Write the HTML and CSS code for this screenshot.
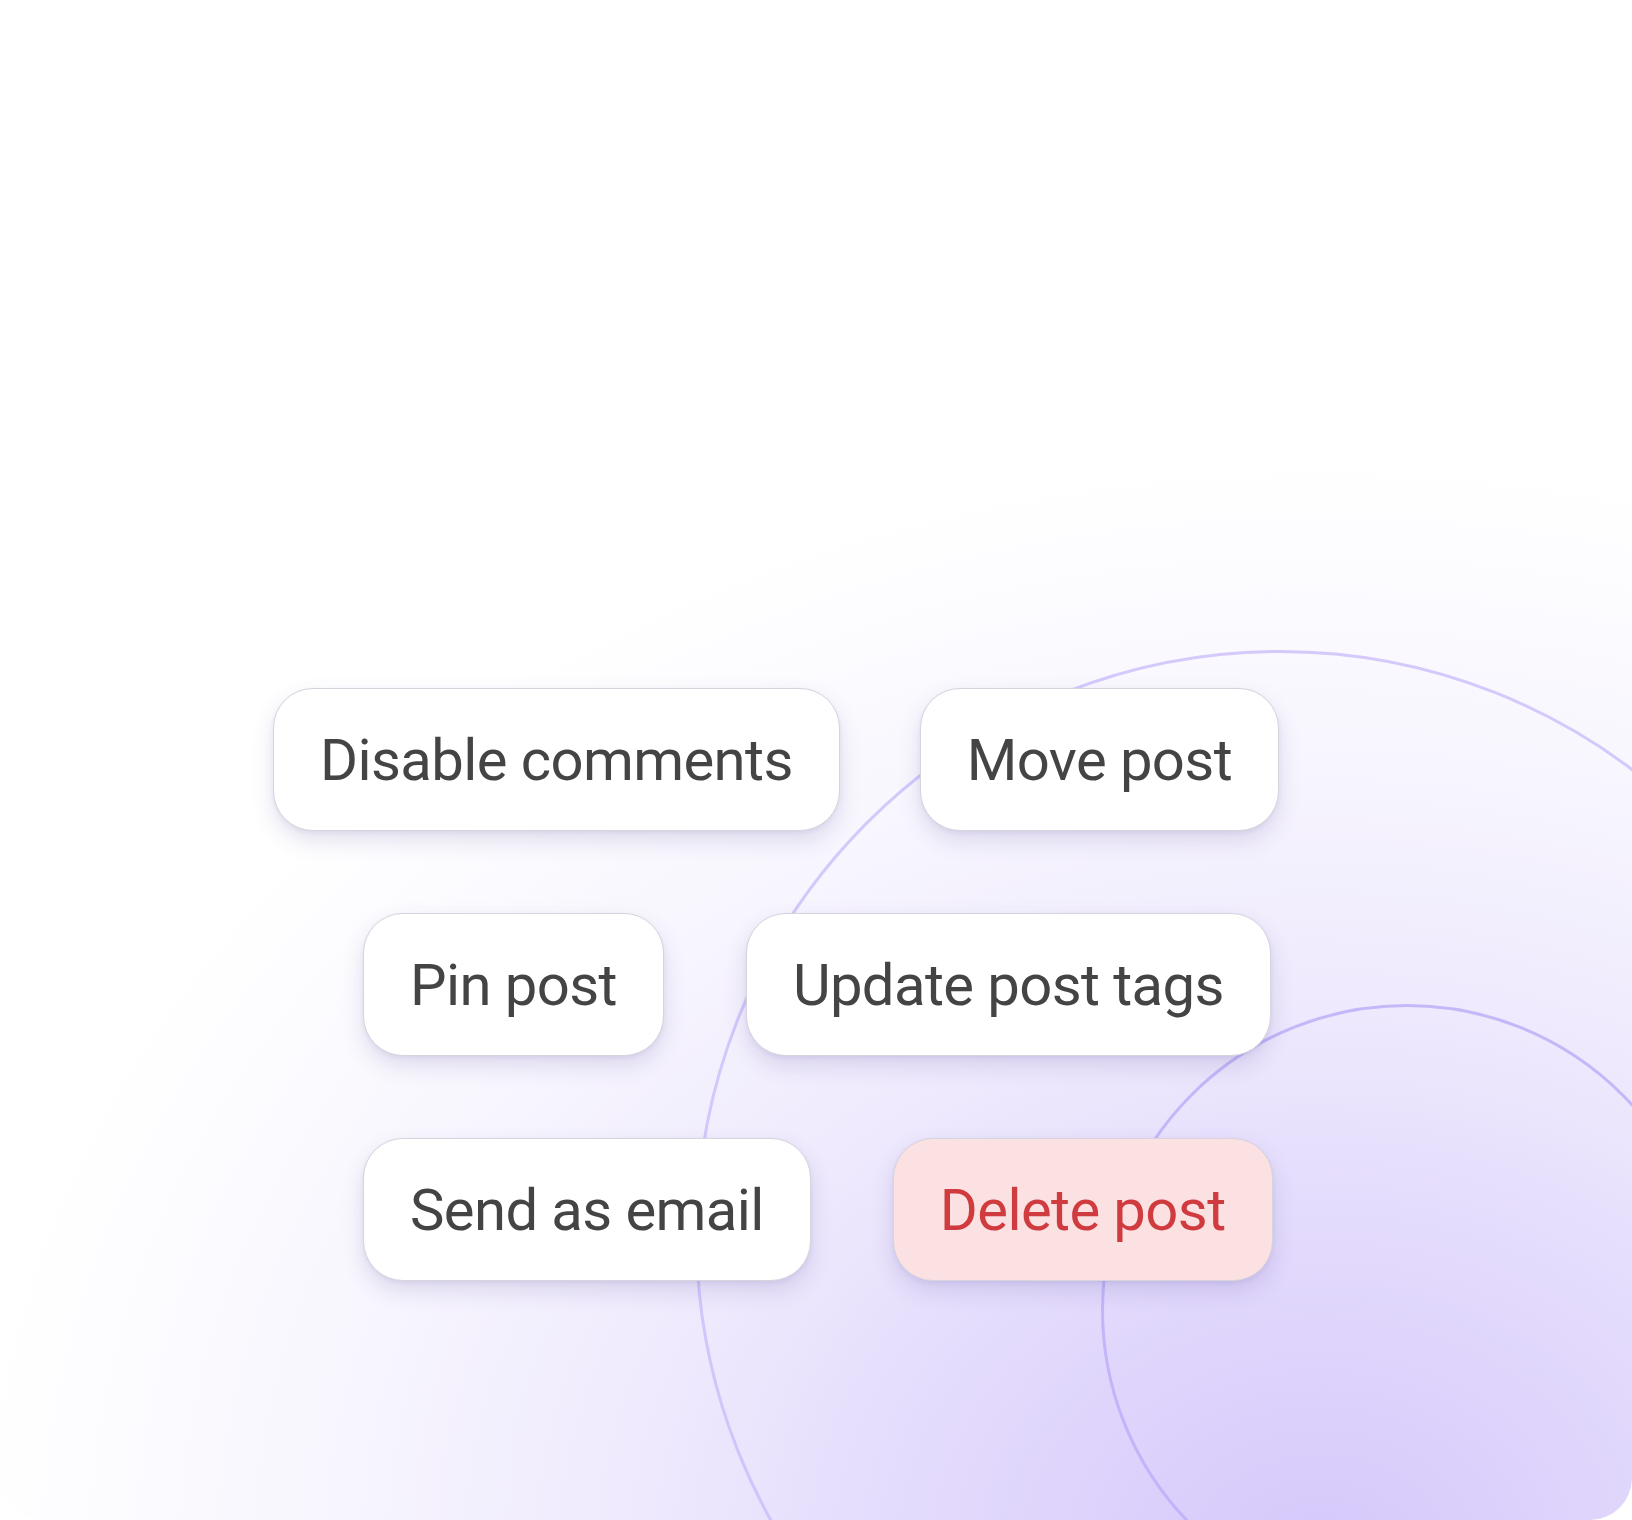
FILE: index.html
```html
<!DOCTYPE html>
<html lang="en">
<head>
<meta charset="utf-8">
<title>Post actions</title>
<link rel="stylesheet" href="styles.css">
</head>
<body>
<div class="card">
  <div class="ring ring-big"></div>
  <div class="ring ring-small"></div>
  <div class="actions">
    <div class="row row-first">
      <button class="pill">Disable comments</button>
      <button class="pill">Move post</button>
    </div>
    <div class="row row-indent">
      <button class="pill">Pin post</button>
      <button class="pill">Update post tags</button>
    </div>
    <div class="row row-indent">
      <button class="pill">Send as email</button>
      <button class="pill pill-danger">Delete post</button>
    </div>
  </div>
</div>
</body>
</html>
```

FILE: styles.css
```css
html, body {
  margin: 0;
  padding: 0;
  background: #ffffff;
}

.card {
  position: relative;
  width: 1632px;
  height: 1520px;
  overflow: hidden;
  border-radius: 0 0 42px 42px;
  background:
    radial-gradient(ellipse 1350px 1100px at 1320px 1560px,
      #d5c8fb 0%,
      #e2d9fc 28%,
      #eee9fd 50%,
      #f7f5fe 72%,
      #ffffff 100%);
  font-family: Roboto, "Noto Sans", sans-serif;
}

.ring {
  position: absolute;
  border-radius: 50%;
  box-sizing: border-box;
}

.ring-big {
  left: 695px;
  top: 650px;
  width: 1170px;
  height: 1170px;
  border: 3px solid rgba(200, 186, 250, 0.75);
}

.ring-small {
  left: 1101px;
  top: 1004px;
  width: 612px;
  height: 612px;
  border: 3px solid rgba(190, 174, 248, 0.85);
}

.actions {
  position: relative;
  padding-top: 688px;
  display: flex;
  flex-direction: column;
  gap: 82px;
}

.row {
  display: flex;
  gap: 82px;
}

.row-first {
  margin-left: 273px;
  gap: 80px;
}

.row-indent {
  margin-left: 363px;
}

.pill {
  height: 143px;
  box-sizing: border-box;
  padding: 0 46px;
  border: 1px solid #d6d4dc;
  border-radius: 40px;
  background: #ffffff;
  color: #444444;
  font-family: Roboto, "Noto Sans", sans-serif;
  font-size: 58px;
  font-weight: 400;
  letter-spacing: -0.6px;
  line-height: 1;
  white-space: nowrap;
  box-shadow: 0 10px 22px rgba(90, 70, 150, 0.16), 0 2px 4px rgba(90, 70, 150, 0.08);
  cursor: pointer;
}

.pill-danger {
  background: #fce1e2;
  color: #d03b40;
}
```
